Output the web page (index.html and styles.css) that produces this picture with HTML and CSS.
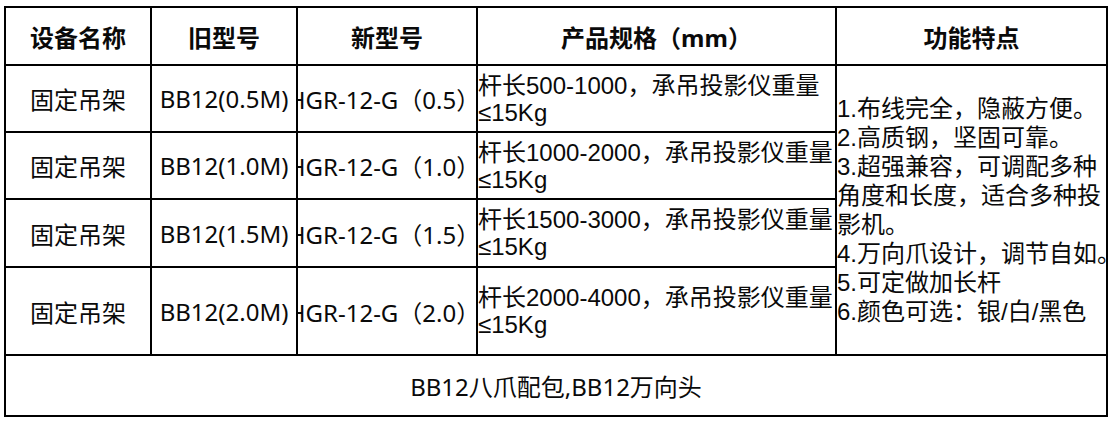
FILE: index.html
```html
<!DOCTYPE html>
<html lang="zh-CN">
<head>
<meta charset="utf-8">
<title>固定吊架</title>
<link rel="stylesheet" href="styles.css">
</head>
<body>
<table class="spec-table">
  <colgroup>
    <col class="c-name">
    <col class="c-old">
    <col class="c-new">
    <col class="c-spec">
    <col class="c-feat">
  </colgroup>
  <thead>
    <tr class="row-head">
      <th>设备名称</th>
      <th>旧型号</th>
      <th>新型号</th>
      <th>产品规格（mm）</th>
      <th>功能特点</th>
    </tr>
  </thead>
  <tbody>
    <tr class="row-a">
      <td class="cell-c">固定吊架</td>
      <td class="cell-c">BB12(0.5M)</td>
      <td class="cell-c"><div class="fit">HGR-12-G（0.5）</div></td>
      <td class="cell-spec">杆长500-1000，承吊投影仪重量<br>≤15Kg</td>
      <td class="cell-feat" rowspan="4">1.布线完全，隐蔽方便。<br>2.高质钢，坚固可靠。<br>3.超强兼容，可调配多种<br>角度和长度，适合多种投<br>影机。<br>4.万向爪设计，调节自如。<br>5.可定做加长杆<br>6.颜色可选：银/白/黑色</td>
    </tr>
    <tr class="row-a">
      <td class="cell-c">固定吊架</td>
      <td class="cell-c">BB12(1.0M)</td>
      <td class="cell-c"><div class="fit">HGR-12-G（1.0）</div></td>
      <td class="cell-spec">杆长1000-2000，承吊投影仪重量<br>≤15Kg</td>
    </tr>
    <tr class="row-b">
      <td class="cell-c">固定吊架</td>
      <td class="cell-c">BB12(1.5M)</td>
      <td class="cell-c"><div class="fit">HGR-12-G（1.5）</div></td>
      <td class="cell-spec">杆长1500-3000，承吊投影仪重量<br>≤15Kg</td>
    </tr>
    <tr class="row-c">
      <td class="cell-c">固定吊架</td>
      <td class="cell-c">BB12(2.0M)</td>
      <td class="cell-c"><div class="fit">HGR-12-G（2.0）</div></td>
      <td class="cell-spec">杆长2000-4000，承吊投影仪重量<br>≤15Kg</td>
    </tr>
    <tr class="row-foot">
      <td class="cell-c" colspan="5">BB12八爪配包,BB12万向头</td>
    </tr>
  </tbody>
</table>
</body>
</html>
```

FILE: styles.css
```css
html, body {
  margin: 0;
  padding: 0;
  background: #ffffff;
}

body {
  padding: 6px 0 0 4px;
  color: #0a0a0a;
  font-family: "Noto Sans", "Noto Sans CJK SC", sans-serif;
  font-size: 24px;
}

.spec-table {
  border-collapse: collapse;
  table-layout: fixed;
  width: 1102px;
}

.c-name { width: 146px; }
.c-old { width: 146px; }
.c-new { width: 180px; }
.c-spec { width: 359px; }
.c-feat { width: 271px; }

.spec-table th,
.spec-table td {
  border: 2px solid #000000;
  padding: 0;
  overflow: hidden;
  white-space: nowrap;
  vertical-align: middle;
}

.spec-table th {
  font-weight: 700;
  text-align: center;
}

.row-head { height: 58px; }
.row-a { height: 67px; }
.row-b { height: 68px; }
.row-c { height: 88px; }
.row-foot { height: 61px; }

.cell-c {
  text-align: center;
}

.fit {
  display: flex;
  justify-content: center;
  margin-left: -6px;
}

.cell-spec {
  text-align: left;
  padding-left: 1px;
  font-family: "Liberation Sans", "Noto Sans CJK SC", sans-serif;
  line-height: 27px;
  padding-top: 3px;
}

.cell-feat {
  text-align: left;
  padding-left: 2px;
  font-family: "Liberation Sans", "Noto Sans CJK SC", sans-serif;
  line-height: 29px;
  padding-bottom: 8px;
}
```
